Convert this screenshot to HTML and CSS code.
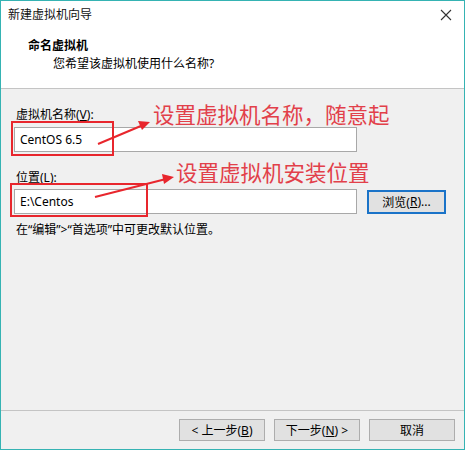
FILE: index.html
```html
<!DOCTYPE html>
<html lang="zh-CN">
<head>
<meta charset="utf-8">
<title>新建虚拟机向导</title>
<link rel="stylesheet" href="styles.css">
</head>
<body>
<div class="window">
  <div class="top">
    <div class="titlebar">
      <span class="title">新建虚拟机向导</span>
      <svg class="close" width="12" height="12" viewBox="0 0 12 12"><path d="M1 1 L11 11 M11 1 L1 11" stroke="#333" stroke-width="1.1" fill="none"/></svg>
    </div>
    <div class="heading">命名虚拟机</div>
    <div class="subheading">您希望该虚拟机使用什么名称?</div>
  </div>
  <div class="body">
    <div class="label">虚拟机名称(<u>V</u>):</div>
    <div class="row">
      <div class="input">CentOS 6.5</div>
    </div>
    <div class="label label2">位置(<u>L</u>):</div>
    <div class="row">
      <div class="input">E:\Centos</div>
      <div class="btn browse">浏览(<u>R</u>)...</div>
    </div>
    <div class="note">在“编辑”&gt;“首选项”中可更改默认位置。</div>
  </div>
  <div class="footer">
    <div class="btn">&lt; 上一步(<u>B</u>)</div>
    <div class="btn">下一步(<u>N</u>) &gt;</div>
    <div class="btn">取消</div>
  </div>

  <svg class="marks" width="465" height="450" viewBox="0 0 465 450">
    <rect x="12" y="122" width="101" height="33" fill="none" stroke="#e8262d" stroke-width="2"/>
    <rect x="11" y="184" width="136" height="32" fill="none" stroke="#e8262d" stroke-width="2"/>
    <line x1="98" y1="144" x2="142" y2="125.5" stroke="#e8262d" stroke-width="2"/>
    <polygon points="150,122 138,121 142,130" fill="#e8262d"/>
    <line x1="95" y1="197" x2="166" y2="179" stroke="#e8262d" stroke-width="2"/>
    <polygon points="174,177 162,174 164,184" fill="#e8262d"/>
  </svg>
  <div class="annot annot1">设置虚拟机名称，随意起</div>
  <div class="annot annot2">设置虚拟机安装位置</div>
</div>
</body>
</html>
```

FILE: styles.css
```css
html, body {
  margin: 0;
  padding: 0;
  background: #ffffff;
}
body {
  font-family: "Noto Sans", "Noto Sans CJK SC", sans-serif;
  font-size: 12px;
  color: #000;
}
.window {
  position: relative;
  width: 465px;
  height: 450px;
  box-sizing: border-box;
  border: 1px solid #35b3b3;
  display: flex;
  flex-direction: column;
  background: #f0f0f0;
  overflow: hidden;
}
.top {
  background: #ffffff;
  height: 87px;
  border-bottom: 1px solid #c4c4c4;
  flex: none;
}
.titlebar {
  height: 28px;
  display: flex;
  align-items: center;
  justify-content: space-between;
  padding: 0 12px 0 7px;
}
.title {
  font-size: 12px;
  line-height: 28px;
  color: #111;
}
.close {
  display: block;
}
.heading {
  margin-top: 8px;
  padding-left: 27px;
  font-weight: bold;
  line-height: 18px;
}
.subheading {
  padding-left: 52px;
  line-height: 18px;
}
.body {
  flex: 1;
  padding: 17px 0 0 13px;
  border-bottom: 1px solid #c4c4c4;
}
.label {
  padding-left: 2px;
  line-height: 18px;
  margin-bottom: 3px;
}
.label2 {
  margin-top: 17px;
  margin-bottom: 2px;
}
.label u, .btn u {
  text-decoration: underline;
}
.row {
  display: flex;
  align-items: center;
  gap: 10px;
}
.input {
  width: 343px;
  height: 25px;
  box-sizing: border-box;
  background: #fff;
  border: 1px solid #a8a8a8;
  padding-left: 5px;
  line-height: 23px;
  font-size: 12px;
}
.note {
  margin-top: 7px;
  padding-left: 2px;
  line-height: 18px;
}
.btn {
  height: 22px;
  box-sizing: border-box;
  background: #e1e1e1;
  border: 1px solid #adadad;
  display: flex;
  align-items: center;
  justify-content: center;
  font-size: 12px;
}
.browse {
  width: 79px;
  height: 24px;
  border: 2px solid #1a73c8;
}
.footer {
  height: 38px;
  flex: none;
  display: flex;
  justify-content: flex-end;
  gap: 9px;
  padding: 8px 9px 0 0;
  box-sizing: border-box;
}
.footer .btn {
  width: 86px;
}
.marks {
  position: absolute;
  left: -1px;
  top: -1px;
  pointer-events: none;
}
.annot {
  position: absolute;
  font-family: "Noto Sans CJK SC", sans-serif;
  font-size: 21.5px;
  line-height: 24px;
  color: #e2404a;
  white-space: nowrap;
}
.annot1 {
  left: 152px;
  top: 101px;
}
.annot2 {
  left: 175px;
  top: 159px;
}
```
